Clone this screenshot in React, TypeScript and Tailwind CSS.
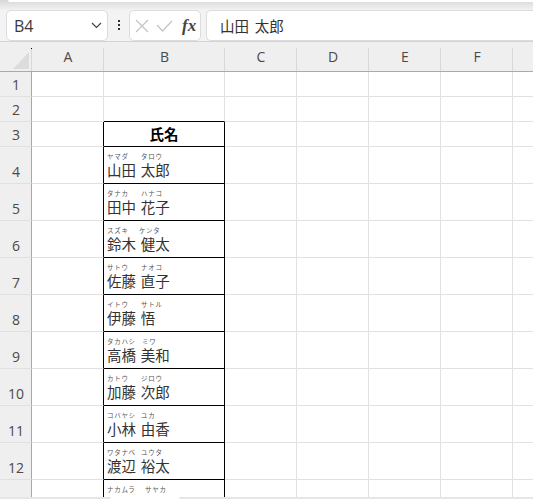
import React from "react";

const JP = "font-['Noto_Sans_CJK_JP','Noto_Sans',sans-serif]";
const UI = "font-['Open_Sans','Noto_Sans',sans-serif]";

type Name = { r: number; f1: string; f2: string; k1: string; k2: string; gap: string };

const names: Name[] = [
  { r: 4, f1: "ヤマダ", f2: "タロウ", k1: "山田", k2: "太郎", gap: "w-[34px]" },
  { r: 5, f1: "タナカ", f2: "ハナコ", k1: "田中", k2: "花子", gap: "w-[34px]" },
  { r: 6, f1: "スズキ", f2: "ケンタ", k1: "鈴木", k2: "健太", gap: "w-[32px]" },
  { r: 7, f1: "サトウ", f2: "ナオコ", k1: "佐藤", k2: "直子", gap: "w-[34px]" },
  { r: 8, f1: "イトウ", f2: "サトル", k1: "伊藤", k2: "悟", gap: "w-[34px]" },
  { r: 9, f1: "タカハシ", f2: "ミワ", k1: "高橋", k2: "美和", gap: "w-[35px]" },
  { r: 10, f1: "カトウ", f2: "ジロウ", k1: "加藤", k2: "次郎", gap: "w-[34px]" },
  { r: 11, f1: "コバヤシ", f2: "ユカ", k1: "小林", k2: "由香", gap: "w-[34px]" },
  { r: 12, f1: "ワタナベ", f2: "ユウタ", k1: "渡辺", k2: "裕太", gap: "w-[34px]" },
];

const gridCols = "grid grid-cols-[32px_72px_121px_72px_72px_72px_72px_72px]";

const headTick =
  "bg-[linear-gradient(#d8d8d8,#d8d8d8)] bg-no-repeat bg-[position:right_bottom] bg-[length:1px_23px]";

function RowHeader({ n, cls }: { n?: number; cls: string }) {
  return (
    <div className={`${cls} flex items-end justify-center pb-[1px] pl-[1px] bg-[#efefef] border-r border-r-[#a8a8a8] border-b border-b-[#e0e0e0] text-[14px] text-[#4a4a4a] ${UI}`}>
      {n}
    </div>
  );
}

function Blank({ black = false, cls }: { black?: boolean; cls: string }) {
  return <div className={`${cls} border-b border-b-[#e1e1e1] border-r ${black ? "border-r-black" : "border-r-[#e1e1e1]"}`} />;
}

function Row({ n, h, children, edge }: { n?: number; h: string; children: React.ReactNode; edge: boolean }) {
  return (
    <>
      <RowHeader n={n} cls={h} />
      <Blank cls={h} black={edge} />
      {children}
      <Blank cls={h} />
      <Blank cls={h} />
      <Blank cls={h} />
      <Blank cls={h} />
      <Blank cls={h} />
    </>
  );
}

export default function App() {
  return (
    <div className="w-[533px] h-[499px] overflow-hidden relative bg-white">
      {/* ribbon edge */}
      <div className="h-[10px] bg-gradient-to-b from-[#d8d8d8] to-[#f2f2f2] relative">
        <div className="h-[2px] ml-[8px] bg-white rounded-bl-[6px]" />
      </div>

      {/* formula bar */}
      <div className="h-[31px] bg-[#f3f3f3] flex items-stretch pl-[6px] pb-[1px]">
        <div className={`w-[102px] h-[31px] bg-white border border-[#dcdcdc] rounded-[5px] flex items-center justify-between pl-[7px] pr-[5px] text-[16px] text-[#3a3a3a] ${UI}`}>
          <span>B4</span>
          <svg width="11" height="7" viewBox="0 0 11 7" fill="none" stroke="#444" strokeWidth="1.2">
            <path d="M1 1 L5.5 5.5 L10 1" />
          </svg>
        </div>
        <div className="w-[21px] flex flex-col items-center justify-center gap-[2px]">
          <span className="w-[2px] h-[2px] bg-[#333]" />
          <span className="w-[2px] h-[2px] bg-[#333]" />
          <span className="w-[2px] h-[2px] bg-[#333]" />
        </div>
        <div className="w-[72px] h-[31px] bg-white border border-[#dcdcdc] rounded-[5px] flex items-center">
          <svg width="14" height="14" viewBox="0 0 14 14" fill="none" stroke="#c4c4c4" strokeWidth="1.2" className="ml-[5px]">
            <path d="M1 1 L13 13 M13 1 L1 13" />
          </svg>
          <svg width="17" height="12" viewBox="0 0 17 12" fill="none" stroke="#c4c4c4" strokeWidth="1.2" className="ml-[7px]">
            <path d="M1 5 L6.5 11 L16 1" />
          </svg>
          <span className="ml-[9px] text-[17px] leading-none italic font-bold text-[#444] font-['Liberation_Serif',serif]">fx</span>
        </div>
        <div className={`ml-[5px] flex-1 h-[31px] bg-white border border-[#dcdcdc] border-r-0 rounded-l-[5px] flex items-center pl-[13px] text-[14.5px] [word-spacing:2.5px] text-[#333] ${JP}`}>
          山田 太郎
        </div>
      </div>

      {/* column headers */}
      <div className={`${gridCols} h-[31px] bg-[#efefef] border-t border-t-[#d4d4d4] border-b border-b-[#aaaaaa] relative`}>
        <div className={`relative ${headTick}`}>
          <svg width="16" height="17" viewBox="0 0 16 17" className="absolute right-[3px] bottom-[2px]">
            <path d="M16 0 L16 17 L0 17 Z" fill="#dcdcdc" />
          </svg>
          <span className="absolute right-0 top-[6px] w-[1px] h-[1px] bg-black" />
        </div>
        {["A", "B", "C", "D", "E", "F", ""].map((c) => (
          <div key={c} className={`flex items-center justify-center text-[14px] text-[#4a4a4a] ${UI} ${headTick}`}>
            {c}
          </div>
        ))}
      </div>

      {/* sheet */}
      <div className={gridCols}>
        <Row n={1} h="h-[25px]" edge={false}>
          <Blank cls="h-[25px]" />
        </Row>
        <Row n={2} h="h-[25px]" edge={false}>
          <div className="h-[25px] border-b border-b-black border-r border-r-[#e1e1e1]" />
        </Row>
        <Row n={3} h="h-[25px]" edge>
          <div className={`h-[25px] border-b border-r border-black flex items-center justify-center font-bold text-[14.5px] text-black ${JP}`}>
            氏名
          </div>
        </Row>
        {names.map((x) => (
          <Row key={x.r} n={x.r} h="h-[37px]" edge>
            <div className="h-[37px] border-b border-r border-black pl-[3px] flex flex-col overflow-hidden">
              <div className={`flex h-[13px] items-end text-[6.5px] leading-[8px] tracking-[0.7px] text-[#555] ${JP}`}>
                <span className={x.gap}>{x.f1}</span>
                <span>{x.f2}</span>
              </div>
              <div className={`text-[14.5px] leading-[20px] [word-spacing:1.5px] text-[#333] whitespace-nowrap ${JP}`}>
                {x.k1} {x.k2}
              </div>
            </div>
          </Row>
        ))}
        <Row h="h-[37px]" edge>
          <div className="h-[37px] border-b border-r border-black pl-[3px] flex flex-col overflow-hidden">
            <div className={`flex h-[13px] items-end text-[6.5px] leading-[8px] tracking-[0.7px] text-[#555] ${JP}`}>
              <span className="w-[38px]">ナカムラ</span>
              <span>サヤカ</span>
            </div>
          </div>
        </Row>
      </div>

      {/* sheet tab strip edge */}
      <div className="absolute left-0 right-0 bottom-0 h-[2px] bg-[#e6e6e6] flex">
        <div className="ml-[110px] w-[70px] h-[2px] bg-white rounded-t-[3px]" />
      </div>
    </div>
  );
}
